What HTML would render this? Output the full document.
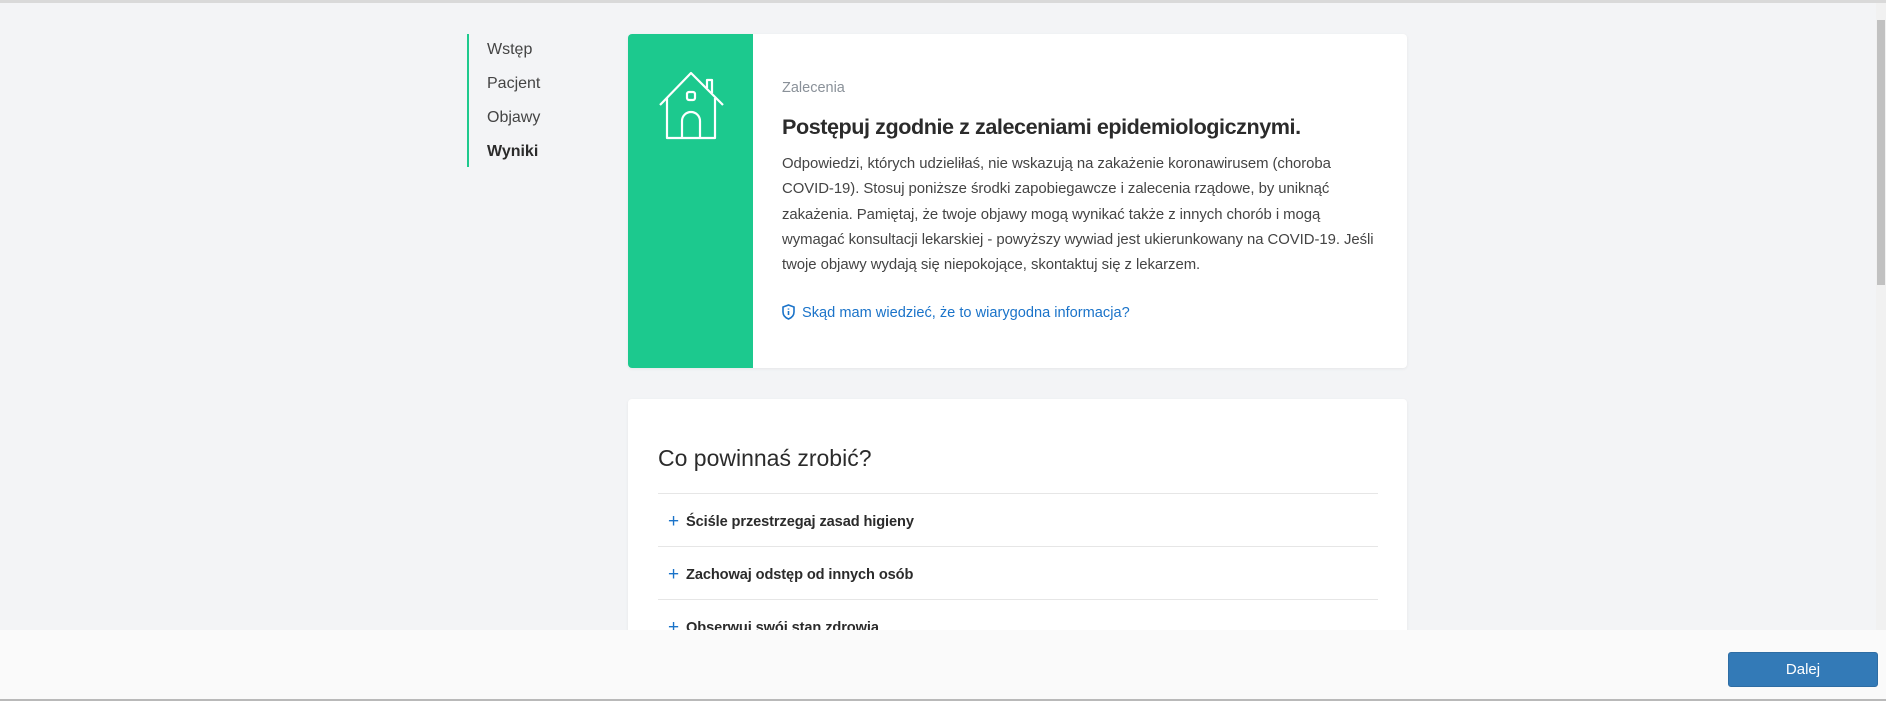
<!DOCTYPE html>
<html><head><meta charset="utf-8">
<style>
*{margin:0;padding:0;box-sizing:border-box}
html,body{width:1886px;height:701px;overflow:hidden}
body{background:#f3f4f6;font-family:"Liberation Sans",sans-serif;position:relative;color:#333}
.topline{position:absolute;left:0;top:0;width:1886px;height:3px;background:#d9d9d9}
.nav{position:absolute;left:467px;top:34px;height:133px;border-left:2px solid #1ec98d}
.nav div{position:absolute;left:18px;font-size:16px;color:#444;white-space:nowrap}
.card{position:absolute;left:628px;width:779px;background:#fff;border-radius:4px;box-shadow:0 1px 3px rgba(0,0,0,.06)}
.c1{top:34px;height:334px;overflow:hidden}
.green{position:absolute;left:0;top:0;width:125px;height:334px;background:#1cc98e}
.c2{top:399px;height:300px}
.lab{position:absolute;left:154px;top:46px;font-size:14.5px;color:#8a9199}
.title{position:absolute;left:154px;top:80px;font-size:21.6px;font-weight:bold;color:#2b2b2b;letter-spacing:-0.45px;white-space:nowrap}
.para{position:absolute;left:154px;top:118px;width:620px;font-size:14.9px;line-height:25.3px;color:#444;white-space:nowrap;letter-spacing:-0.05px}
.link{position:absolute;left:154px;top:270px;font-size:14.6px;color:#1a73c9;white-space:nowrap}
.link svg{vertical-align:-3px;margin-right:7px}
.h2{position:absolute;left:30px;top:46px;font-size:23px;color:#2b2b2b;white-space:nowrap}
.div{position:absolute;left:30px;width:720px;height:1px;background:#e6e6e6}
.row{position:absolute;left:40px;font-size:14.6px;font-weight:bold;color:#2b2b2b;white-space:nowrap;letter-spacing:-0.1px}
.row b{color:#1a73c9;font-weight:normal;font-size:19px;margin-right:7px;position:relative;top:1px}
.footer{position:absolute;left:0;top:630px;width:1886px;height:71px;background:#fafafa;border-bottom:2px solid #b9b9b9}
.btn{position:absolute;left:1728px;top:652px;width:150px;height:35px;background:#337ab7;border:1px solid #2e6da4;border-radius:3px;color:#fff;font-size:15px;text-align:center;line-height:33px}
.sb{position:absolute;left:1876px;top:3px;width:10px;height:627px;background:#f1f1f1}
.sb i{position:absolute;left:1px;top:17px;width:8px;height:265px;background:#c1c1c1}
</style></head><body>
<div class="topline"></div>
<div class="nav">
<div style="top:7px">Wstęp</div>
<div style="top:41px">Pacjent</div>
<div style="top:75px">Objawy</div>
<div style="top:109px;font-weight:bold;color:#2b2b2b">Wyniki</div>
</div>
<div class="card c1">
<div class="green">
<svg style="position:absolute;left:31px;top:37px" width="66" height="70" viewBox="0 0 66 70" fill="none" stroke="#fff" stroke-width="2.2" stroke-linejoin="round">
<path d="M1 34 L32 2 L64 34"/>
<path d="M48 17 V9 H53 V22"/>
<path d="M8 27 V67 H56 V27"/>
<rect x="28" y="21" width="8" height="8" rx="2"/>
<path d="M23 67 V50 a9 9 0 0 1 18 0 V67"/>
</svg>
</div>
<div class="lab">Zalecenia</div>
<div class="title">Postępuj zgodnie z zaleceniami epidemiologicznymi.</div>
<div class="para">Odpowiedzi, których udzieliłaś, nie wskazują na zakażenie koronawirusem (choroba<br>COVID-19). Stosuj poniższe środki zapobiegawcze i zalecenia rządowe, by uniknąć<br>zakażenia. Pamiętaj, że twoje objawy mogą wynikać także z innych chorób i mogą<br>wymagać konsultacji lekarskiej - powyższy wywiad jest ukierunkowany na COVID-19. Jeśli<br>twoje objawy wydają się niepokojące, skontaktuj się z lekarzem.</div>
<div class="link"><svg width="13" height="16" viewBox="0 0 13 16" fill="none" stroke="#1a73c9" stroke-width="1.6"><path d="M6.5 1 L12 3 V8 C12 11.5 9.5 13.8 6.5 15 C3.5 13.8 1 11.5 1 8 V3 Z"/><path d="M6.5 7 V11 M6.5 4.5 V5.6"/></svg>Skąd mam wiedzieć, że to wiarygodna informacja?</div>
</div>
<div class="card c2">
<div class="h2">Co powinnaś zrobić?</div>
<div class="div" style="top:94px"></div>
<div class="row" style="top:111px"><b>+</b>Ściśle przestrzegaj zasad higieny</div>
<div class="div" style="top:147px"></div>
<div class="row" style="top:164px"><b>+</b>Zachowaj odstęp od innych osób</div>
<div class="div" style="top:200px"></div>
<div class="row" style="top:217px"><b>+</b>Obserwuj swój stan zdrowia</div>
</div>
<div class="sb"><i></i></div>
<div class="footer"></div>
<div class="btn">Dalej</div>
</body></html>
